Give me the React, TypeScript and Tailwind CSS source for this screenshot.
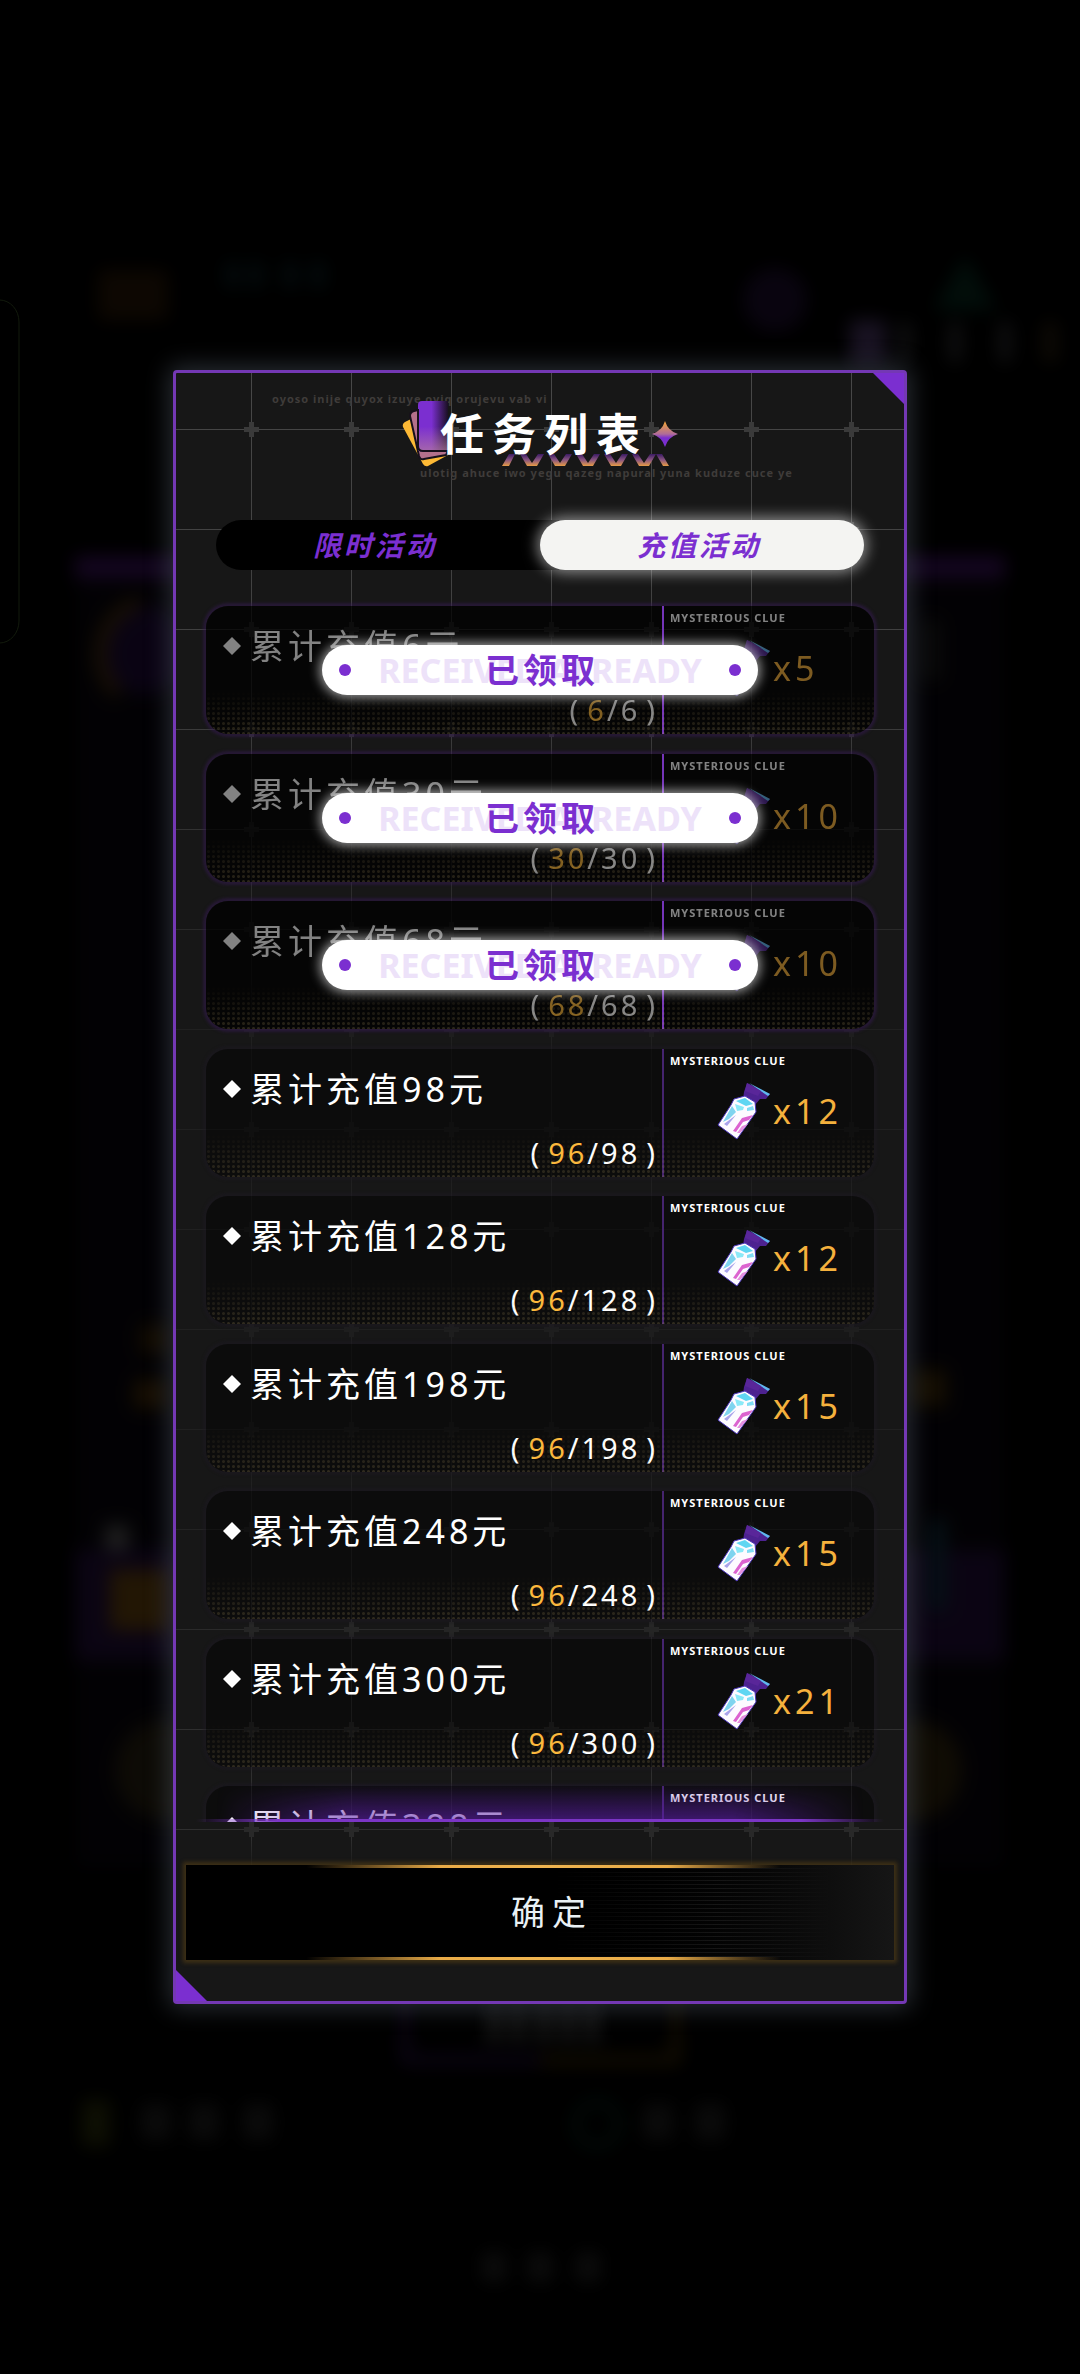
import { useState } from "react";
import clsx from "clsx";

type Task = {
  target: number;
  progress: number;
  reward: number;
  claimed?: boolean;
};

const TABS = ["限时活动", "充值活动"];

const TASKS: Task[] = [
  { target: 6, progress: 6, reward: 5, claimed: true },
  { target: 30, progress: 30, reward: 10, claimed: true },
  { target: 68, progress: 68, reward: 10, claimed: true },
  { target: 98, progress: 96, reward: 12 },
  { target: 128, progress: 96, reward: 12 },
  { target: 198, progress: 96, reward: 15 },
  { target: 248, progress: 96, reward: 15 },
  { target: 300, progress: 96, reward: 21 },
  { target: 388, progress: 96, reward: 21 },
];

// Dimmed page behind the dialog
function Backdrop() {
  return (
    <svg
      className="absolute inset-0 h-full w-full"
      viewBox="0 0 1080 2374"
      preserveAspectRatio="xMidYMid slice"
      aria-hidden="true"
    >
      <defs>
        <filter id="soft" x="-20%" y="-20%" width="140%" height="140%" colorInterpolationFilters="sRGB">
          <feGaussianBlur stdDeviation="9" />
        </filter>
      </defs>
      <rect x="-20" y="300" width="39" height="343" rx="22" fill="none" stroke="#121a0c" />
      <g opacity="0.15">
        <g filter="url(#soft)">
          <rect x="75" y="578" width="930" height="1290" fill="#120c1c" />
          <rect x="75" y="556" width="930" height="22" fill="#8a2ad8" />
          <rect x="75" y="1550" width="930" height="110" fill="#4a2080" />
          <rect x="98" y="270" width="70" height="50" fill="#5a3410" />
          <path d="M232 262v26M256 262v26M290 262v26M318 262v26" stroke="#20505a" strokeWidth="14" />
          <circle cx="775" cy="300" r="32" fill="#402068" />
          <path d="M965 255l32 55h-64z" fill="#105c44" />
          <rect x="850" y="320" width="36" height="45" fill="#a47ce0" />
          <path d="M905 322v40M955 322v40M1005 322v40" stroke="#787880" strokeWidth="12" />
          <path d="M1050 322v40" stroke="#6a5028" strokeWidth="14" />
          <circle cx="145" cy="650" r="44" fill="#441a80" />
          <path d="M118 694a54 54 0 0 1 22-92" fill="none" stroke="#a87018" strokeWidth="12" />
          <rect x="920" y="620" width="20" height="60" fill="#4a4a4a" />
          <rect x="140" y="1325" width="30" height="28" fill="#805210" />
          <rect x="134" y="1380" width="34" height="28" fill="#a06614" />
          <rect x="910" y="1370" width="36" height="36" fill="#906414" />
          <rect x="110" y="1570" width="60" height="60" fill="#e29420" />
          <rect x="105" y="1525" width="24" height="26" fill="#c8c8c8" />
          <rect x="928" y="1520" width="18" height="90" fill="#2a6c90" />
          <circle cx="165" cy="1770" r="50" fill="#5a4a28" />
          <circle cx="912" cy="1770" r="50" fill="#6a5220" />
          <path d="M405 1990v70h135" fill="none" stroke="#7030c0" strokeWidth="7" />
          <path d="M540 2060h136v-70" fill="none" stroke="#c08618" strokeWidth="7" />
          <path d="M494 2004v38M518 2004v38M544 2004v38M568 2004v38M592 2004v38" stroke="#a0a0a0" strokeWidth="14" />
          <rect x="82" y="2100" width="28" height="46" fill="#606818" />
          <path d="M156 2104v36M204 2104v36M258 2104v36" stroke="#484848" strokeWidth="30" />
          <circle cx="597" cy="2124" r="22" fill="none" stroke="#186048" strokeWidth="7" />
          <path d="M658 2104v36M710 2104v36" stroke="#484848" strokeWidth="30" />
          <path d="M494 2252v30M540 2252v30M588 2252v30" stroke="#505050" strokeWidth="24" />
        </g>
      </g>
    </svg>
  );
}

function GridPattern() {
  return (
    <svg
      className="absolute inset-0 h-full w-full [mask-image:linear-gradient(to_bottom,black_0%,rgba(0,0,0,0.8)_20%,rgba(0,0,0,0.2)_40%,rgba(0,0,0,0.2)_68%,rgba(0,0,0,0.5)_82%,rgba(0,0,0,0.5)_90%,transparent_92%)]"
      aria-hidden="true"
    >
      <defs>
        <pattern id="grid" x="25" y="6" width="100" height="100" patternUnits="userSpaceOnUse">
          <path d="M50.5 0v100M0 50.5h100" stroke="#484848" strokeWidth="1" />
        </pattern>
        <pattern id="plus" x="25" y="6" width="100" height="100" patternUnits="userSpaceOnUse">
          <path d="M50.5 43v15M43 50.5h15" stroke="#3c3c3c" strokeWidth="5" />
        </pattern>
      </defs>
      <rect width="100%" height="100%" fill="url(#grid)" />
      <rect width="100%" height="100%" fill="url(#plus)" />
    </svg>
  );
}

function CardsIcon() {
  return (
    <svg className="-my-2 h-[66px] w-[46px] shrink-0" viewBox="0 0 46 66" aria-hidden="true">
      <defs>
        <linearGradient id="cardFront" x1="0" y1="0" x2="1" y2="0">
          <stop offset="0" stopColor="#7b2fd0" />
          <stop offset="0.45" stopColor="#7b2fd0" />
          <stop offset="1" stopColor="#1a1023" />
        </linearGradient>
        <linearGradient id="cardDots" x1="0" y1="0" x2="0" y2="1">
          <stop offset="0.5" stopColor="#b9809b" stopOpacity="0" />
          <stop offset="1" stopColor="#b9809b" stopOpacity="0.7" />
        </linearGradient>
      </defs>
      <path d="M1 26Q0 23 3 21L9 18L46 54L26 65Q23 66 21 63Z" fill="#fdb935" />
      <path d="M8 15Q8 11 12 10L20 8L46 50L44 54L22 58Q18 59 17 55Z" fill="#b4708b" stroke="#17101b" strokeWidth="2" />
      <path d="M16 4Q16 0 20 0H46V51H20Q16 51 16 47Z" fill="url(#cardFront)" />
      <path d="M16 4Q16 0 20 0H46V51H20Q16 51 16 47Z" fill="url(#cardDots)" />
      <path d="M16 8V45Q16 50 21 50H46" fill="none" stroke="#17101b" strokeWidth="2" />
    </svg>
  );
}

function Sparkle() {
  return (
    <svg className="ml-1 h-[26px] w-[26px] shrink-0" viewBox="0 0 26 26" aria-hidden="true">
      <defs>
        <linearGradient id="spark" x1="0" y1="0" x2="0" y2="1">
          <stop offset="0.1" stopColor="#e79b45" />
          <stop offset="0.5" stopColor="#b06d98" />
          <stop offset="0.65" stopColor="#7b2fd0" />
          <stop offset="1" stopColor="#7b2fd0" />
        </linearGradient>
      </defs>
      <path d="M13 0Q16 10 26 13Q16 16 13 26Q10 16 0 13Q10 10 13 0Z" fill="url(#spark)" />
    </svg>
  );
}

function Zigzag() {
  return (
    <svg className="absolute -bottom-[5px] left-[62px] -z-10 h-3 w-[168px]" viewBox="0 0 168 12" aria-hidden="true">
      <defs>
        <linearGradient id="zig" gradientUnits="userSpaceOnUse" x1="0" y1="0" x2="0" y2="12">
          <stop offset="0" stopColor="#3a1a63" />
          <stop offset="0.5" stopColor="#8a5580" />
          <stop offset="1" stopColor="#e79b45" />
        </linearGradient>
      </defs>
      <path
        d="M0 12L7 0H13L7 12ZM18 0H24L30 9L36 0H42L35 12H25ZM46 0H52L58 9L64 0H70L63 12H53ZM74 0H80L86 9L92 0H98L91 12H81ZM102 0H108L114 9L120 0H126L119 12H109ZM130 0H136L142 9L148 0H154L147 12H137ZM154 0H160L167 12H161Z"
        fill="url(#zig)"
      />
    </svg>
  );
}

function ClueBottle() {
  return (
    <svg className="h-[58px] w-[54px] shrink-0" viewBox="0 0 54 58" aria-hidden="true">
      <path d="M30 1L53 12L49 17L43 17L38 23L26 17L27 10Z" fill="#4d2290" />
      <path d="M32 1L53 12L51 14Z" fill="#5fb7ee" />
      <path d="M30 1L44 9L41 14L28 9Z" fill="#592699" />
      <path d="M17 17L28 14L38 20L39 30L20 57L1 43L14 23Z" fill="#fdfbff" stroke="#4a35b8" strokeWidth="1" />
      <path d="M19 19L28 16L36 22L29 24Z" fill="#5fd6f2" />
      <path d="M18 22L27 25L26 28L20 29Z" fill="#8be9f7" />
      <path d="M30 26L36 24L37 28L30 29Z" fill="#7fdcf4" />
      <path d="M15 24L19 30L12 37L6 40Z" fill="#7fd4ef" />
      <path d="M19 33L10 44L7 42Z" fill="#a9a3ea" />
      <path d="M36 33L25 36L16 49L19 50L26 40L32 38Z" fill="#dc63d0" />
      <path d="M31 42L25 44L20 51L23 51Z" fill="#e58fe0" />
    </svg>
  );
}

function ClaimedBadge() {
  return (
    <div className="absolute inset-0 flex items-center justify-center">
      <div className="relative flex h-[50px] w-[436px] items-center justify-between rounded-full bg-white px-[17px] shadow-[0_0_12px_2px_rgba(255,255,255,0.65)]">
        <span className="h-3 w-3 rounded-full bg-[#7b2fd0]" />
        <span className="text-[34px] leading-[50px] font-bold text-[#ede2f9]" aria-hidden="true">
          RECEIVED ALREADY
        </span>
        <span className="h-3 w-3 rounded-full bg-[#7b2fd0]" />
        <span className="absolute inset-0 pl-1 text-center text-[34px] leading-[50px] font-bold tracking-[4px] text-[#7b2fd0]">
          已领取
        </span>
      </div>
    </div>
  );
}

function TaskRow({ task }: { task: Task }) {
  const { target, progress, reward, claimed } = task;
  const dim = claimed && "opacity-50";

  return (
    <li
      className={clsx(
        "relative mb-5 flex h-32 rounded-[22px] even:mb-[19px]",
        claimed
          ? "bg-black/75 shadow-[0_0_3px_3px_rgba(54,26,84,0.5)]"
          : "bg-black/45 shadow-[0_0_3px_3px_rgba(30,26,38,0.4)]"
      )}
    >
      <div className="pointer-events-none absolute inset-0 rounded-[22px] bg-[radial-gradient(circle,rgba(190,165,105,0.2)_1px,transparent_2px)] bg-[size:5px_5px] [mask-image:linear-gradient(to_bottom,transparent_66%,black_100%)]" />
      <div className={clsx("flex flex-1 flex-col justify-between pt-4 pr-1 pb-2 pl-[17px] text-white", dim)}>
        <p className="flex items-center gap-[9px] text-[34px] leading-[48px] tracking-[4px]">
          <svg className="h-[18px] w-[18px]" viewBox="0 0 18 18" aria-hidden="true">
            <path d="M9 0L18 9L9 18L0 9Z" fill="currentColor" />
          </svg>
          累计充值{target}元
        </p>
        <p className="flex justify-end gap-[6px] text-[29px] leading-8 tracking-[3px]">
          <span>(</span>
          <span>
            <span className="text-[#fdb93c]">{progress}</span>/{target}
          </span>
          <span>)</span>
        </p>
      </div>
      <div className={clsx("w-[2px]", claimed ? "bg-[#7434b8]" : "bg-[#45246e]")} />
      <div className={clsx("w-[210px] pt-1 pl-[6px]", dim)}>
        <p className="text-[11px] leading-4 font-bold tracking-[1px] text-white">MYSTERIOUS CLUE</p>
        <div className="mt-[13px] flex items-center gap-0.5 pl-[47px]">
          <ClueBottle />
          <span className="text-[34px] leading-[58px] tracking-[4px] text-[#f5b13d]">x{reward}</span>
        </div>
      </div>
      {claimed && <ClaimedBadge />}
    </li>
  );
}

export default function App() {
  const [activeTab, setActiveTab] = useState(1);

  return (
    <div className="relative flex min-h-screen items-center justify-center overflow-hidden bg-black font-['Noto_Sans','Noto_Sans_CJK_SC',sans-serif]">
      <Backdrop />
      <section
        role="dialog"
        aria-labelledby="task-title"
        className="relative w-full max-w-[734px] rounded-sm border-3 border-[#7438b4] bg-[#171717] shadow-[0_0_24px_4px_rgba(100,112,128,0.4)]"
      >
        <GridPattern />
        <div className="absolute top-0 right-0 h-[31px] w-[31px] bg-[#7b2fd0] [clip-path:polygon(0_0,100%_0,100%_100%)]" />
        <div className="absolute bottom-0 left-0 h-[31px] w-[31px] bg-[#7b2fd0] [clip-path:polygon(0_0,100%_100%,0_100%)]" />

        <div className="relative">
          <header className="pt-[18px]">
            <p className="pl-24 text-[11px] leading-4 font-bold tracking-[1px] text-[#3f3c3a]" aria-hidden="true">
              oyoso inije quyox izuye oviq orujevu vab vi
            </p>
            <div className="flex h-[54px] items-center justify-center">
              <CardsIcon />
              <h1
                id="task-title"
                className="relative z-0 -ml-2 text-[44px] leading-[54px] font-bold tracking-[8px] whitespace-nowrap text-white"
              >
                任务列表
                <Zigzag />
              </h1>
              <Sparkle />
            </div>
            <p className="mt-1 pl-[244px] text-[11px] leading-4 font-bold tracking-[1px] text-[#3f3c3a]" aria-hidden="true">
              ulotig ahuce iwo yegu qazeg napural yuna kuduze cuce ye
            </p>
          </header>

          <div role="tablist" className="mx-10 mt-[39px] flex rounded-full bg-black">
            {TABS.map((tab, i) => (
              <button
                key={tab}
                type="button"
                role="tab"
                aria-selected={activeTab === i}
                onClick={() => setActiveTab(i)}
                className={clsx(
                  "h-[50px] flex-1 rounded-full pr-[6px] text-[28px] leading-[50px] font-bold tracking-[3px] text-[#7b2fd0] italic",
                  activeTab === i && "bg-[#f4f4f2] shadow-[0_0_14px_3px_rgba(255,255,255,0.5)]"
                )}
              >
                {tab}
              </button>
            ))}
          </div>

          <div className="relative mx-5 mt-5">
            <ul className="max-h-[1232px] overflow-y-auto px-[10px] pt-4 [scrollbar-width:none]">
              {TASKS.map((task) => (
                <TaskRow key={task.target} task={task} />
              ))}
            </ul>
            <div className="pointer-events-none absolute inset-x-0 bottom-0">
              <div className="h-9 bg-linear-to-t from-[#5b1fa8]/60 to-transparent [mask-image:linear-gradient(to_right,transparent_3%,black_22%,black_78%,transparent_97%)]" />
              <div className="h-[3px] bg-[linear-gradient(to_right,transparent,#7b35c4_12%,#7b35c4_88%,transparent)]" />
            </div>
          </div>

          <div className="px-[10px] pt-[43px] pb-[41px]">
            <button
              type="button"
              className="relative block h-[95px] w-full bg-linear-to-r from-black from-50% to-[#161616] text-center text-[34px] leading-[95px] tracking-[7px] text-[#e9f1f5] shadow-[0_0_4px_3px_rgba(120,84,20,0.4)]"
            >
              <span className="absolute inset-0 bg-[repeating-linear-gradient(to_bottom,transparent_0_3px,rgba(255,255,255,0.08)_3px_4px)] [mask-image:linear-gradient(to_right,transparent_52%,black_75%,transparent_92%)]" />
              <span className="absolute inset-x-0 top-0 h-[3px] bg-[linear-gradient(to_right,transparent_17%,#e9ab47_36%,#f0b550_50%,#e9ab47_68%,transparent_84%)]" />
              <span className="absolute inset-x-0 bottom-0 h-[3px] bg-[linear-gradient(to_right,transparent_17%,#e9ab47_36%,#f0b550_50%,#e9ab47_68%,transparent_84%)]" />
              <span className="relative pl-6">确定</span>
            </button>
          </div>
        </div>
      </section>
    </div>
  );
}
